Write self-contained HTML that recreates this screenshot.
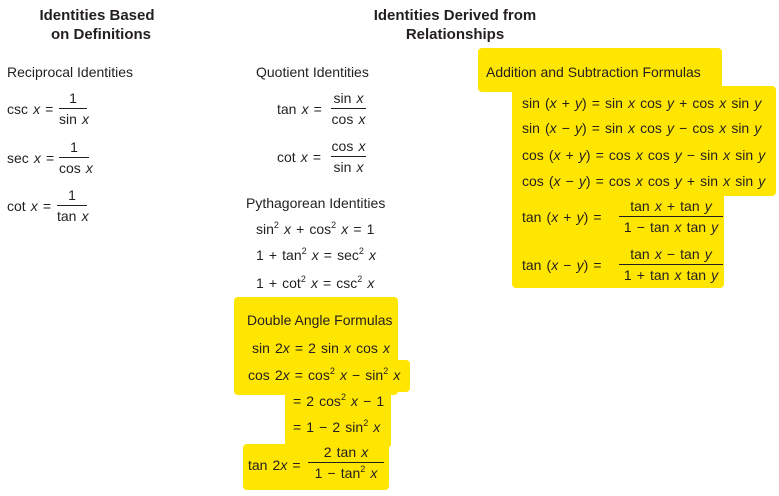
<!DOCTYPE html>
<html><head><meta charset="utf-8"><style>
body{margin:0;width:779px;height:496px;background:#fff;position:relative;overflow:hidden;font-family:"Liberation Sans",sans-serif;color:#231f20;font-size:14px}
.a{position:absolute;white-space:nowrap;line-height:16px;word-spacing:1.2px}
.h{font-weight:bold;text-align:center;font-size:15px;word-spacing:0}
i{font-style:italic}
sup{font-size:9px;vertical-align:6px;line-height:0}
.y{position:absolute;background:#ffe600;border-radius:4px}
.fr{position:absolute;text-align:center;white-space:nowrap;line-height:16px;word-spacing:1.2px}
.fr .n{border-bottom:1px solid #231f20;padding-bottom:2px}
.fr .d{padding-top:2px}
</style></head><body>
<div class="y" style="left:478px;top:48px;width:244px;height:44px"></div>
<div class="y" style="left:512px;top:86px;width:264px;height:110px"></div>
<div class="y" style="left:512px;top:190px;width:212px;height:98px"></div>
<div class="y" style="left:234px;top:297px;width:164px;height:98px"></div>
<div class="y" style="left:240px;top:360px;width:170px;height:32px"></div>
<div class="y" style="left:285px;top:390px;width:106px;height:58px"></div>
<div class="y" style="left:243px;top:444px;width:146px;height:46px"></div>

<div class="a h" style="left:0;width:194px;top:8px">Identities Based</div>
<div class="a h" style="left:0;width:202px;top:27px">on Definitions</div>
<div class="a h" style="left:355px;width:200px;top:8px">Identities Derived from</div>
<div class="a h" style="left:355px;width:200px;top:27px">Relationships</div>

<div class="a" style="left:7px;top:64px;word-spacing:0">Reciprocal Identities</div>
<div class="a" style="left:7px;top:101px">csc <i>x</i> =</div>
<div class="fr" style="left:59px;top:90px;width:28px"><div class="n">1</div><div class="d">sin <i>x</i></div></div>
<div class="a" style="left:7px;top:150px">sec <i>x</i> =</div>
<div class="fr" style="left:59px;top:139px;width:30px"><div class="n">1</div><div class="d">cos <i>x</i></div></div>
<div class="a" style="left:7px;top:198px">cot <i>x</i> =</div>
<div class="fr" style="left:57px;top:187px;width:30px"><div class="n">1</div><div class="d">tan <i>x</i></div></div>

<div class="a" style="left:256px;top:64px;word-spacing:0">Quotient Identities</div>
<div class="a" style="left:277px;top:101px">tan <i>x</i> =</div>
<div class="fr" style="left:331px;top:90px;width:35px"><div class="n">sin <i>x</i></div><div class="d">cos <i>x</i></div></div>
<div class="a" style="left:277px;top:149px">cot <i>x</i> =</div>
<div class="fr" style="left:331px;top:138px;width:35px"><div class="n">cos <i>x</i></div><div class="d">sin <i>x</i></div></div>

<div class="a" style="left:246px;top:195px;word-spacing:0">Pythagorean Identities</div>
<div class="a" style="left:256px;top:221px">sin<sup>2</sup> <i>x</i> + cos<sup>2</sup> <i>x</i> = 1</div>
<div class="a" style="left:256px;top:247px">1 + tan<sup>2</sup> <i>x</i> = sec<sup>2</sup> <i>x</i></div>
<div class="a" style="left:256px;top:275px">1 + cot<sup>2</sup> <i>x</i> = csc<sup>2</sup> <i>x</i></div>

<div class="a" style="left:247px;top:312px;word-spacing:0">Double Angle Formulas</div>
<div class="a" style="left:252px;top:340px">sin 2<i>x</i> = 2 sin <i>x</i> cos <i>x</i></div>
<div class="a" style="left:248px;top:367px">cos 2<i>x</i> = cos<sup>2</sup> <i>x</i> − sin<sup>2</sup> <i>x</i></div>
<div class="a" style="left:293px;top:393px">= 2 cos<sup>2</sup> <i>x</i> − 1</div>
<div class="a" style="left:293px;top:419px">= 1 − 2 sin<sup>2</sup> <i>x</i></div>
<div class="a" style="left:248px;top:457px">tan 2<i>x</i> =</div>
<div class="fr" style="left:308px;top:444px;width:76px"><div class="n">2 tan <i>x</i></div><div class="d">1 − tan<sup>2</sup> <i>x</i></div></div>

<div class="a" style="left:486px;top:64px;word-spacing:0">Addition and Subtraction Formulas</div>
<div class="a" style="left:522px;top:95px">sin (<i>x</i> + <i>y</i>) = sin <i>x</i> cos <i>y</i> + cos <i>x</i> sin <i>y</i></div>
<div class="a" style="left:522px;top:120px">sin (<i>x</i> − <i>y</i>) = sin <i>x</i> cos <i>y</i> − cos <i>x</i> sin <i>y</i></div>
<div class="a" style="left:522px;top:147px">cos (<i>x</i> + <i>y</i>) = cos <i>x</i> cos <i>y</i> − sin <i>x</i> sin <i>y</i></div>
<div class="a" style="left:522px;top:173px">cos (<i>x</i> − <i>y</i>) = cos <i>x</i> cos <i>y</i> + sin <i>x</i> sin <i>y</i></div>
<div class="a" style="left:522px;top:209px">tan (<i>x</i> + <i>y</i>) =</div>
<div class="fr" style="left:619px;top:198px;width:104px"><div class="n">tan <i>x</i> + tan <i>y</i></div><div class="d">1 − tan <i>x</i> tan <i>y</i></div></div>
<div class="a" style="left:522px;top:257px">tan (<i>x</i> − <i>y</i>) =</div>
<div class="fr" style="left:619px;top:246px;width:104px"><div class="n">tan <i>x</i> − tan <i>y</i></div><div class="d">1 + tan <i>x</i> tan <i>y</i></div></div>
</body></html>
